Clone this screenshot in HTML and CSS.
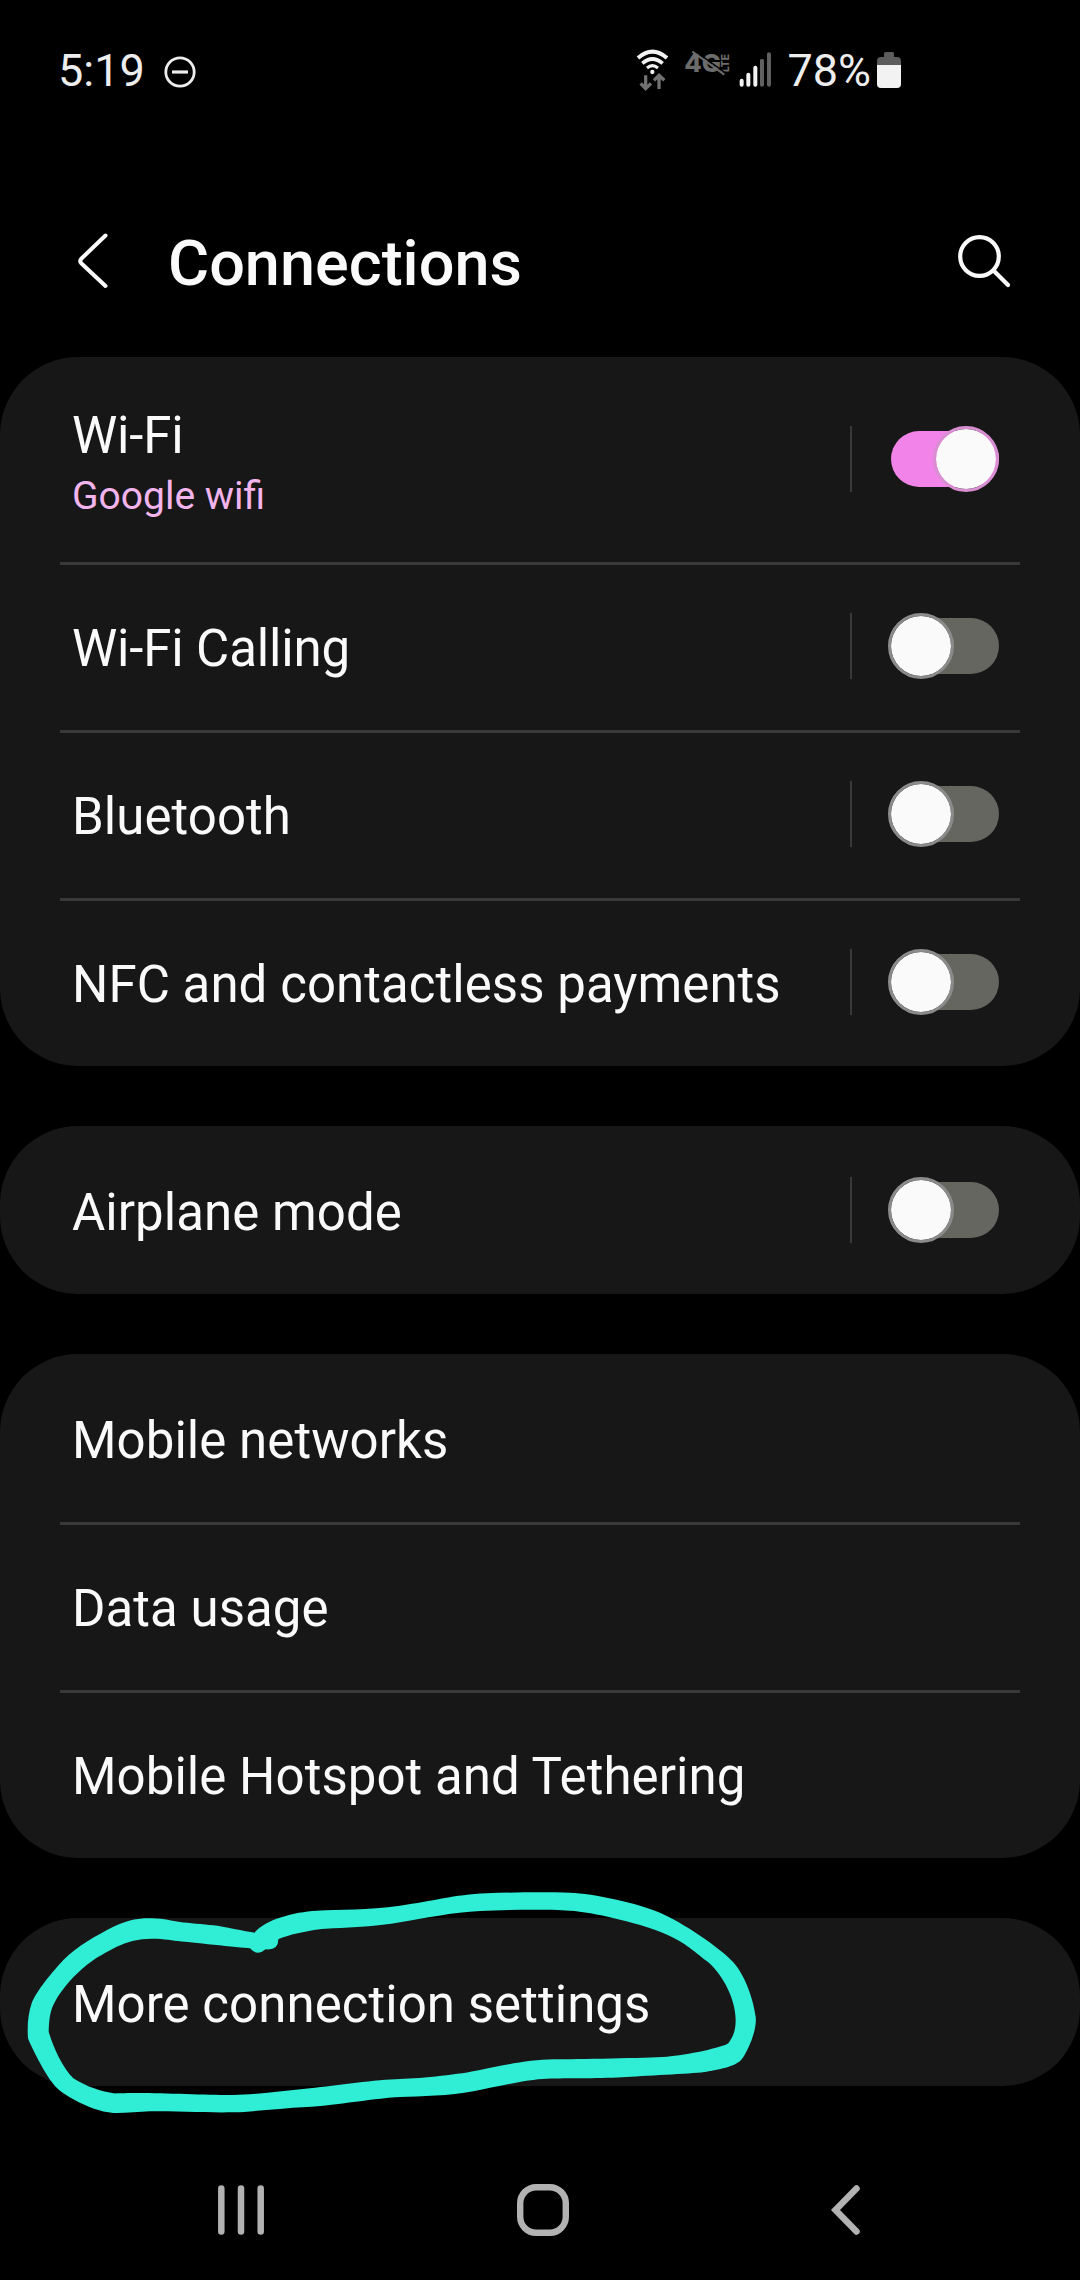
FILE: index.html
```html
<!DOCTYPE html>
<html lang="en">
<head>
<meta charset="utf-8">
<title>Connections</title>
<link rel="stylesheet" href="styles.css">
</head>
<body>
<div class="screen">
  <div class="status-bar">
    <span class="clock">5:19</span>
    <svg class="dnd" viewBox="0 0 32 32" width="32" height="32"><circle cx="16" cy="16" r="14.2" fill="none" stroke="#ededed" stroke-width="2.8"/><path d="M8 16H24" stroke="#ededed" stroke-width="3.2"/></svg>
    <div class="status-icons">
      <svg class="wifi" viewBox="48 60 99 126" width="33" height="42" fill="none">
        <path d="M54 87Q97 49 141 87" stroke="#f2f2f2" stroke-width="12"/>
        <path d="M67 103Q97 77 128 103" stroke="#f2f2f2" stroke-width="11"/>
        <path d="M81 117Q97 103 114 117" stroke="#f2f2f2" stroke-width="9"/>
        <circle cx="97" cy="129" r="6.5" fill="#f2f2f2"/>
        <path d="M77 139V178M62 163L77 179L93 163M117 180V140M102 154L117 139L133 154" stroke="#727272" stroke-width="10"/>
      </svg>
      <svg class="lte" viewBox="192 60 140 78" width="46.67" height="26">
        <g fill="#6c6c6c" font-family="Inter, sans-serif" font-weight="800">
          <text x="193" y="126" font-size="74" textLength="110" lengthAdjust="spacingAndGlyphs">4G</text>
          <text transform="translate(328 126) rotate(-90)" font-size="31" textLength="54" lengthAdjust="spacingAndGlyphs">LTE</text>
        </g>
        <path d="M222 61L318 130" stroke="#000" stroke-width="4"/>
        <path d="M217 65L313 134" stroke="#6c6c6c" stroke-width="6"/>
      </svg>
      <svg class="signal" viewBox="356 68 98 105" width="32.67" height="35" stroke-width="12" stroke-linecap="round">
        <path d="M364 154V166M384 136V166M405 115V166" stroke="#f2f2f2"/>
        <path d="M425 94V166M446 75V166" stroke="#606060"/>
      </svg>
      <span class="percent">78%</span>
      <svg class="battery" viewBox="0 0 24 36" width="24" height="36"><path d="M7 1.5Q7 0 8.500 0H15.500Q17 0 17 1.500V5H20Q24 5 24 9V13H0V9Q0 5 4 5H7Z" fill="#5c5c5c"/><path d="M0 13H24V32Q24 36 20 36H4Q0 36 0 32Z" fill="#f2f2f2"/></svg>
    </div>
  </div>

  <header class="app-bar">
    <svg class="back" viewBox="0 0 32 58" width="32" height="58" fill="none" stroke="#fafafa" stroke-width="4" stroke-linecap="round" stroke-linejoin="round"><path d="M28.500 3.500L4.500 26.500Q2 29 4.500 31.500L28.500 54"/></svg>
    <h1 class="title">Connections</h1>
    <svg class="search" viewBox="0 0 54 54" width="54" height="54" fill="none" stroke="#fafafa"><circle cx="22.500" cy="22.500" r="19.300" stroke-width="4.200"/><path d="M36.500 36.500L51 51" stroke-width="4.200" stroke-linecap="round"/></svg>
  </header>

  <main class="groups">
    <section class="card">
      <div class="row row-tall">
        <div class="label tight">Wi-Fi<span class="sub">Google wifi</span></div>
        <div class="control"><span class="switch on"></span></div>
      </div>
      <div class="row"><div class="label tight">Wi-Fi Calling</div><div class="control"><span class="switch"></span></div></div>
      <div class="row"><div class="label">Bluetooth</div><div class="control"><span class="switch"></span></div></div>
      <div class="row"><div class="label">NFC and contactless payments</div><div class="control"><span class="switch"></span></div></div>
    </section>
    <section class="card">
      <div class="row"><div class="label">Airplane mode</div><div class="control"><span class="switch"></span></div></div>
    </section>
    <section class="card">
      <div class="row"><div class="label">Mobile networks</div></div>
      <div class="row"><div class="label">Data usage</div></div>
      <div class="row"><div class="label">Mobile Hotspot and Tethering</div></div>
    </section>
    <section class="card marked">
      <div class="row"><div class="label">More connection settings</div></div>
      <svg class="ink" viewBox="0 0 2400 840" width="800" height="280">
        <path fill="#30edd6" fill-rule="evenodd" d="M765 216C800 178 880 156 950 152S1100 150 1200 137S1360 104 1460 100S1640 96 1710 98S1915 130 1980 158S2160 262 2200 307S2262 430 2267 470S2243 575 2225 598S2150 630 2120 635S1950 646 1880 651S1700 654 1640 656S1490 680 1420 694S1260 709 1200 711S1000 737 920 741S760 755 700 757S530 754 450 754C415 755 375 760 340 759C300 756 260 740 220 718C190 700 174 690 160 672C135 642 94 562 84 535C81 495 85 460 95 430C108 395 155 338 190 300C235 255 285 229 340 200C385 180 415 174 455 175S515 183 540 186S610 193 640 196S735 215 765 218Z
        M835 238C870 223 940 207 1000 205S1130 199 1200 187S1360 157 1440 153S1640 148 1710 152S1910 188 1980 215S2080 272 2120 303S2207 410 2207 480C2207 510 2200 530 2185 550C2170 562 2060 586 2000 590S1730 597 1660 598S1500 617 1440 630S1270 655 1200 657S1010 676 930 685S760 704 700 705S480 698 400 699S360 701 340 700C300 694 260 680 220 655C190 625 160 565 146 515C147 480 150 450 165 425C185 387 225 343 260 315C290 290 320 277 350 260C385 244 415 236 455 236S520 242 540 244S720 263 750 265Q772 290 797 268Q835 272 835 238Z"/>
      </svg>
    </section>
  </main>

  <nav class="nav-bar">
    <svg class="recents" viewBox="0 0 46 50" width="46" height="50" stroke="#b2b2b2" stroke-width="6.500" stroke-linecap="round"><path d="M3.300 3.500V46.500M23 3.500V46.500M42.700 3.500V46.500"/></svg>
    <svg class="home" viewBox="0 0 52 52" width="52" height="52" fill="none" stroke="#b2b2b2" stroke-width="6.400"><rect x="3.200" y="3.200" width="45.600" height="45.600" rx="16"/></svg>
    <svg class="nav-back" viewBox="0 0 29 50" width="29" height="50" fill="none" stroke="#b2b2b2" stroke-width="6.500" stroke-linecap="round"><path d="M25.500 3.500L4.500 25L25.500 46.500"/></svg>
  </nav>
</div>
</body>
</html>
```
FILE: styles.css
```css
* { box-sizing: border-box; }
body { margin: 0; background: #000; color: #fafafa; font-family: Roboto, sans-serif; }
svg { display: block; flex: none; overflow: visible; }

.screen { width: 1080px; height: 2280px; overflow: hidden; display: flex; flex-direction: column; }

.status-bar { height: 140px; padding: 2px 179px 0 58px; display: flex; align-items: center; font-size: 45px; color: #ededed; }
.clock { line-height: 52px; }
.dnd { margin: 2px 0 0 19px; }
.status-icons { margin-left: auto; display: flex; align-items: flex-start; height: 52px; }
.wifi { margin-top: 4px; }
.lte { margin: 5px 0 0 15px; }
.signal { margin: 7px 0 0 8px; }
.percent { margin-left: 16px; line-height: 52px; }
.battery { margin: 7px 0 0 6px; }

.app-bar { height: 217px; padding: 30px 69px 0 77px; display: flex; align-items: flex-start; }
.back { margin-top: 62px; }
.title { margin: 57px 0 0 59px; font-size: 63px; line-height: 74px; font-weight: 500; }
.search { margin: 64px 0 0 auto; }

.groups { display: flex; flex-direction: column; gap: 60px; }
.card { background: #171717; border-radius: 78px; }
.row { height: 168px; padding: 0 81px 0 72px; display: flex; align-items: center; justify-content: space-between; }
.row-tall { height: 205px; padding-bottom: 1px; }
.row + .row { background: linear-gradient(#393939, #393939) 60px 0 / 960px 3px no-repeat; }
.label { padding-top: 5px; font-size: 51px; line-height: 60px; letter-spacing: 0.05px; white-space: nowrap; }
.label.tight { letter-spacing: -0.15px; }
.sub { display: block; padding-top: 4px; margin-bottom: -4px; font-size: 39px; line-height: 52px; letter-spacing: 0; color: #f2b4ec; }

.control { width: 149px; height: 66px; border-left: 2px solid #393939; display: flex; align-items: center; justify-content: flex-end; }
.switch { position: relative; width: 108px; height: 56px; border-radius: 28px; background: #65665f; }
.switch::before { content: ""; box-sizing: border-box; position: absolute; left: -3px; top: -5px; width: 66px; height: 66px; border-radius: 50%; border: 3px solid #8b8b8b; background: #fafafa; background-clip: padding-box; }
.switch.on { background: #f283e8; }
.switch.on::before { left: 42px; border-color: #d98ed2; }

.marked { position: relative; }
.ink { position: absolute; left: 0; top: -58px; pointer-events: none; }

.nav-bar { flex: 1; padding: 69px 0 15px 218px; display: flex; align-items: center; }
.home { margin-left: 253px; }
.nav-back { margin-left: 262px; }
```
